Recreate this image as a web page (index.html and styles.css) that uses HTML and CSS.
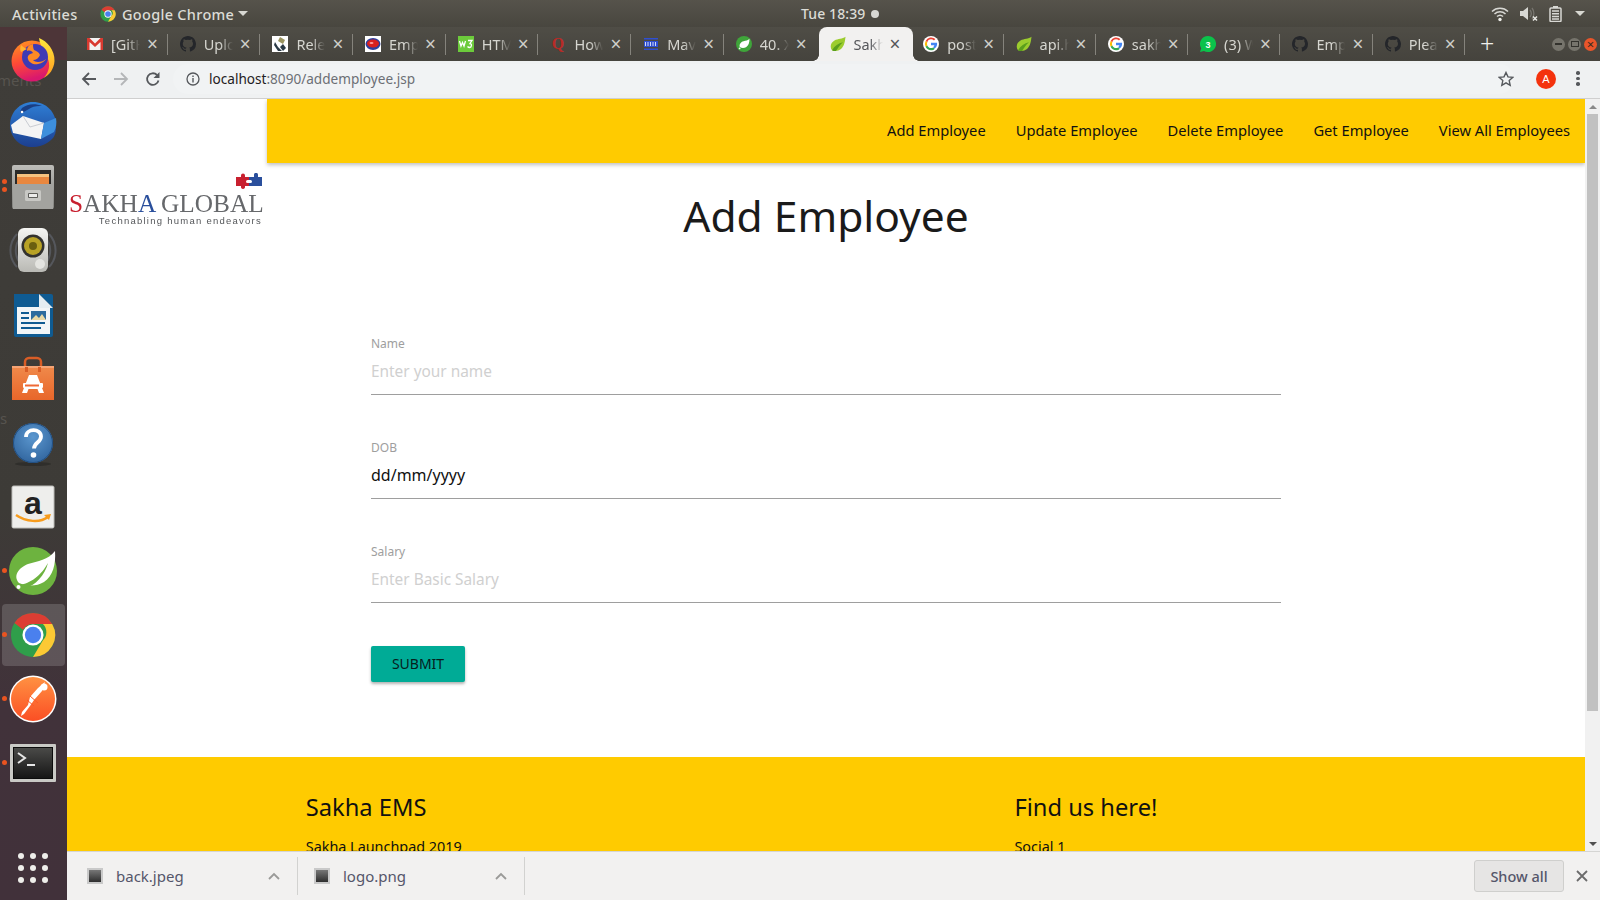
FILE: index.html
```html
<!DOCTYPE html>
<html lang="en">
<head>
<meta charset="utf-8">
<title>Add Employee</title>
<link rel="stylesheet" href="styles.css">
</head>
<body>
<svg class="defs" aria-hidden="true">
  <defs>
    <linearGradient id="ffg" x1="0" y1="0" x2="0.3" y2="1"><stop offset="0" stop-color="#ff9a1f"/><stop offset=".55" stop-color="#ff4a36"/><stop offset="1" stop-color="#d9186e"/></linearGradient>
    <linearGradient id="ffy" x1="0" y1="0" x2="0" y2="1"><stop offset="0" stop-color="#ffe93d"/><stop offset="1" stop-color="#ff9b1f"/></linearGradient>
    <linearGradient id="tb" x1="0" y1="0" x2="0" y2="1"><stop offset="0" stop-color="#2f7fd6"/><stop offset="1" stop-color="#1c3f8f"/></linearGradient>
    <linearGradient id="cab" x1="0" y1="0" x2="0" y2="1"><stop offset="0" stop-color="#bdbdb9"/><stop offset="1" stop-color="#82827e"/></linearGradient>
    <linearGradient id="spk" x1="0" y1="0" x2="0" y2="1"><stop offset="0" stop-color="#f5f5f2"/><stop offset="1" stop-color="#b9b9b4"/></linearGradient>
    <linearGradient id="bag" x1="0" y1="0" x2="0" y2="1"><stop offset="0" stop-color="#f08a4b"/><stop offset="1" stop-color="#e8662a"/></linearGradient>
    <radialGradient id="hlp" cx=".5" cy=".35" r=".75"><stop offset="0" stop-color="#5b97cf"/><stop offset="1" stop-color="#2c5f98"/></radialGradient>
    <linearGradient id="pm" x1="0" y1="0" x2="0" y2="1"><stop offset="0" stop-color="#ff9142"/><stop offset="1" stop-color="#fb4f24"/></linearGradient>
    <linearGradient id="trm" x1="0" y1="0" x2="0" y2="1"><stop offset="0" stop-color="#4a4a48"/><stop offset="1" stop-color="#161616"/></linearGradient>

    <symbol id="chrome" viewBox="0 0 48 48">
      <circle cx="24" cy="24" r="23" fill="#2f9e4a"/>
      <path d="M24 1a23 23 0 0 1 20 11.500H24a12 12 0 0 0-10.400 6L4.600 11.500A23 23 0 0 1 24 1z" fill="#dc3d33"/>
      <path d="M44 12.500A23 23 0 0 1 24 47l10.400-17.500a12 12 0 0 0 0-17z" fill="#fcc934"/>
      <circle cx="24" cy="24" r="11" fill="#fff"/>
      <circle cx="24" cy="24" r="8.500" fill="#4a80ee"/>
    </symbol>
    <symbol id="github" viewBox="0 0 16 16">
      <path fill="#24262a" d="M8 0C3.600 0 0 3.600 0 8c0 3.500 2.300 6.500 5.500 7.600.4.100.5-.2.500-.4v-1.400c-2.200.5-2.700-1-2.700-1-.4-.9-.9-1.200-.9-1.200-.7-.5.100-.5.100-.5.800.1 1.200.8 1.200.8.700 1.200 1.900.9 2.300.7.100-.5.300-.9.500-1.100-1.800-.2-3.700-.9-3.700-4 0-.9.300-1.600.8-2.100-.1-.2-.4-1 .1-2.100 0 0 .7-.2 2.200.8a7.600 7.600 0 0 1 4 0c1.500-1 2.200-.8 2.200-.8.500 1.100.2 1.900.1 2.100.5.600.8 1.300.8 2.100 0 3.100-1.900 3.700-3.700 3.900.3.300.6.800.6 1.500v2.200c0 .2.100.5.600.4A8 8 0 0 0 16 8c0-4.400-3.600-8-8-8z"/>
    </symbol>
    <symbol id="google" viewBox="0 0 16 16">
      <circle cx="8" cy="8" r="8" fill="#fff"/>
      <path fill="#ea4335" d="M8 3.200c1.200 0 2.200.4 3 1.200l1.400-1.400A6.300 6.300 0 0 0 2.600 5l1.700 1.300A3.900 3.900 0 0 1 8 3.200z"/>
      <path fill="#4285f4" d="M14.100 8.100c0-.5 0-.9-.1-1.300H8v2.500h3.400c-.2.800-.6 1.400-1.300 1.900l1.700 1.300c1.400-1.100 2.300-2.700 2.300-4.400z"/>
      <path fill="#fbbc05" d="M4.300 9.500a3.900 3.900 0 0 1 0-3.200L2.600 5a6.200 6.200 0 0 0 0 5.700z"/>
      <path fill="#34a853" d="M8 14.200c1.600 0 3-.5 3.800-1.500l-1.700-1.300c-.6.400-1.300.7-2.100.7-1.700 0-3.100-1.100-3.700-2.600l-1.700 1.300A6.300 6.300 0 0 0 8 14.200z"/>
    </symbol>
    <symbol id="leaf" viewBox="0 0 16 16">
      <path fill="#9ccc2e" d="M15.500.800C15 5 14.500 10 11 13c-2.800 2.300-6.500 2.200-9 1.200C-.5 11 .8 6.500 4.500 4.500 8 2.600 12.500 3.300 15.500.800z"/>
      <path fill="#5a9e1c" d="M2 14.200c2.500-4.500 6.500-7 11-8-3 2.500-5.500 6.500-7 8.800-1.500.1-2.800-.1-4-.8z"/>
    </symbol>
    <symbol id="springc" viewBox="0 0 16 16">
      <circle cx="8" cy="8" r="8" fill="#3fa53a"/>
      <path fill="#fff" d="M13.500 2.800c0 4-1 7-3.500 8.400-2 1.100-4.500 1-6.200-.2C3 8.500 4.800 6 7.500 5.300 9.800 4.700 12 4.500 13.500 2.800z"/>
      <circle cx="3.600" cy="12.400" r=".9" fill="#fff"/>
    </symbol>
  </defs>
</svg>

<header class="topbar">
  <span class="tb-text tb-activities">Activities</span>
  <svg class="tb-chrome" width="16" height="16"><use href="#chrome"/></svg>
  <span class="tb-text tb-app">Google Chrome</span>
  <span class="caret"></span>
  <span class="tb-text tb-clock">Tue 18:39</span>
  <span class="clock-dot"></span>
  <span class="tray">
    <svg width="18" height="16" viewBox="0 0 18 16"><path d="M1 5.500a11.500 11.500 0 0 1 16 0M3.500 8a8 8 0 0 1 11 0M6 10.500a4.500 4.500 0 0 1 6 0" fill="none" stroke="#d8d8d4" stroke-width="1.500"/><circle cx="9" cy="13.500" r="1.700" fill="#f0f0ec"/></svg>
    <svg width="18" height="16" viewBox="0 0 18 16"><path d="M0 5h3l5-4v13l-5-4H0z" fill="#d8d8d4"/><path d="M10 4c1.500 2 1.500 5 0 7M12 2c2.500 3 2.500 8 0 11" fill="none" stroke="#77756f" stroke-width="1.300"/><path d="M13 10.500l4 4M17 10.500l-4 4" stroke="#e8e8e4" stroke-width="1.500"/></svg>
    <svg width="13" height="16" viewBox="0 0 13 16"><rect x="4" y="0" width="5" height="2" fill="#d8d8d4"/><rect x="1" y="2" width="11" height="13.500" rx="1" fill="none" stroke="#d8d8d4" stroke-width="1.500"/><path d="M3 5h7M3 7.700h7M3 10.400h7M3 13h7" stroke="#d8d8d4" stroke-width="1.500"/></svg>
    <span class="caret tray-caret"></span>
  </span>
</header>

<div class="workspace">
  <nav class="dock" aria-label="Launcher">
    <span class="ghost ghost-a">ments</span>
    <span class="ghost ghost-b">s</span>
    <div class="dock-item">
      <svg width="48" height="48" viewBox="0 0 48 48">
        <circle cx="23" cy="26" r="20.500" fill="url(#ffg)"/>
        <path d="M30 3c8 3 16 12 15.500 23-.5 8-5 14-11 17 6-6 7-14 4-20C36 17 31 11 30 3z" fill="url(#ffy)"/>
        <circle cx="26" cy="22" r="13" fill="#3f3ab4"/>
        <path d="M24 9c-5 1-6 4-6 7 3-1 5 0 6 2-4 1-6 3-5 6 1 4 6 6 10 5 4-.5 7-3 8-5-2 2-5 3-8 3-2 0-4-1-5-2 3 0 6-2 7-5-1-3-4-4-6-5-1-2-1-4-1-6z" fill="#ff8a24"/>
        <path d="M12 10c-1 3-1 5 0 7l6-3c-2-1-4-2-6-4z" fill="#ffb52e"/>
      </svg>
    </div>
    <div class="dock-item">
      <svg width="48" height="48" viewBox="0 -2 48 48">
        <path d="M24 1C11 1 1 11 1 24c0 11 8 21 20 22 8 .5 17-2 23-9 3-4 3-9 3-13C47 11 37 1 24 1z" fill="url(#tb)"/>
        <path d="M13 7c5-4 13-5 20-2-5-.5-10 .5-13 3-3 2-6 3-9 4 0-2 1-3 2-5z" fill="#1a3f85"/>
        <circle cx="13" cy="11" r="1.300" fill="#fff"/>
        <path d="M2 24l12-9 21 7-3 16-28-6z" fill="#f4f4f4"/>
        <path d="M14 15l7 11 14-4" fill="none" stroke="#c9ccd2" stroke-width="1"/>
        <path d="M35 22l12-5c1 5 0 10-2 14l-13 7z" fill="#3d8fdc"/>
      </svg>
    </div>
    <div class="dock-item dock-two">
      <svg width="48" height="48" viewBox="0 0 48 48">
        <rect x="3" y="2" width="42" height="44" rx="2" fill="url(#cab)"/>
        <rect x="6" y="7" width="36" height="14" fill="#2b2a28"/>
        <rect x="8" y="11" width="32" height="3" fill="#f5c27f"/>
        <rect x="8" y="14" width="32" height="7" fill="#e8873f"/>
        <rect x="4" y="21" width="40" height="25" fill="#a3a39f"/>
        <rect x="16" y="27" width="16" height="11" rx="1.500" fill="#c8c8c4"/>
        <rect x="19" y="30" width="10" height="5" rx="1" fill="#5f5f5b"/>
        <rect x="20" y="31" width="8" height="3" fill="#ececea"/>
      </svg>
    </div>
    <div class="dock-item">
      <svg width="48" height="48" viewBox="0 0 48 48">
        <path d="M8 7a24 24 0 0 0 0 33M40 7a24 24 0 0 1 0 33M12 10a20 20 0 0 0 0 27M36 10a20 20 0 0 1 0 27" fill="none" stroke="#55575c" stroke-width="2"/>
        <rect x="9" y="1" width="30" height="44" rx="6" fill="url(#spk)"/>
        <circle cx="24" cy="19" r="11.500" fill="#33322e"/>
        <circle cx="24" cy="19" r="9" fill="#b8a225"/>
        <circle cx="24" cy="19" r="4" fill="#6a5e10"/>
        <circle cx="31" cy="37" r="5" fill="#e4e4e0"/>
      </svg>
    </div>
    <div class="dock-item">
      <svg width="48" height="48" viewBox="0 0 48 48">
        <path d="M5 3h25l14 14v27a2 2 0 0 1-2 2H7a2 2 0 0 1-2-2z" fill="#0f5b92"/>
        <path d="M30 3h12a2 2 0 0 1 2 2v12z" fill="#0f5b92"/>
        <path d="M8 16h22l11 0v27H8z" fill="#f1f5f7"/>
        <path d="M30 3l14 14H30z" fill="#e4edf2"/>
        <path d="M12 22h8M12 27h8M12 32h24M12 37h20" stroke="#0f5b92" stroke-width="2"/>
        <rect x="22" y="20" width="15" height="9" fill="#2c6c9e"/>
        <path d="M22 29l5-5 3 3 3-4 4 6z" fill="#e8d9a5"/>
      </svg>
    </div>
    <div class="dock-item">
      <svg width="48" height="48" viewBox="0 0 48 48">
        <path d="M16 12V7a4 4 0 0 1 4-4h8a4 4 0 0 1 4 4v5" fill="none" stroke="#d95d26" stroke-width="2.500"/>
        <path d="M3 11h42v34H3z" fill="url(#bag)"/>
        <path d="M3 11h42v2H3z" fill="#f5a475"/>
        <path d="M16 12h3v5h-3zM29 12h3v5h-3z" fill="#d95d26"/>
        <path d="M20 20h8l7 18h-5l-1.500-4h-9L18 38h-5z" fill="#fff"/>
        <rect x="14" y="28" width="20" height="5" rx="1" fill="#fff"/>
        <rect x="16" y="29.500" width="14" height="2" fill="#ef6a36"/>
      </svg>
    </div>
    <div class="dock-item">
      <svg width="48" height="48" viewBox="0 0 48 48">
        <ellipse cx="24" cy="45" rx="18" ry="2" fill="#2f2e2b"/>
        <circle cx="24" cy="24" r="20" fill="url(#hlp)"/>
        <circle cx="24" cy="24" r="19.500" fill="none" stroke="#224e80" stroke-width="1"/>
        <path d="M17 18c0-9 15-9 15-.5 0 6-7 6-7 12" fill="none" stroke="#fff" stroke-width="3.800"/>
        <circle cx="24.500" cy="36" r="2.800" fill="#fff"/>
      </svg>
    </div>
    <div class="dock-item">
      <svg width="48" height="48" viewBox="0 0 48 48">
        <rect x="3" y="3" width="42" height="42" rx="1.500" fill="#eeeeec" stroke="#bdbdb9"/>
        <text class="amazon-a" x="24" y="31" text-anchor="middle">a</text>
        <path d="M7 32c10 7 24 8 32 2" fill="none" stroke="#f79c1d" stroke-width="2.500"/>
        <path d="M35 32l7-1-2 6z" fill="#f79c1d"/>
      </svg>
    </div>
    <div class="dock-item dock-one">
      <svg width="48" height="48" viewBox="0 0 48 48">
        <circle cx="24" cy="24" r="24" fill="#6db33f"/>
        <path d="M46 4c1 13-2 25-11 31-8 5-18 4-25 1C4 29 9 21 19 17 29 14 39 13 46 4z" fill="#fff"/>
        <path d="M10 38c8-1 20-6 29-22-3 12-13 23-23 25z" fill="#6db33f"/>
        <circle cx="9.500" cy="40" r="2" fill="#fff"/>
      </svg>
    </div>
    <div class="dock-item dock-one dock-active">
      <svg width="46" height="46"><use href="#chrome"/></svg>
    </div>
    <div class="dock-item dock-one">
      <svg width="48" height="48" viewBox="0 0 48 48">
        <circle cx="24" cy="24" r="23.500" fill="#fff"/>
        <circle cx="24" cy="24" r="22" fill="url(#pm)"/>
        <path d="M36 7l-3 9-8 9-4 6-6 8-3 2 1-4 6-7 2-8 8-9z" fill="#fff"/>
        <circle cx="35" cy="12" r="3.500" fill="#fff"/>
        <path d="M21 21l8 7M18 25l7 6" stroke="#fb5a2a" stroke-width="1"/>
      </svg>
    </div>
    <div class="dock-item dock-one">
      <svg width="46" height="38" viewBox="0 0 46 38">
        <rect x="0" y="0" width="46" height="38" rx="1" fill="#c9c9c5"/>
        <rect x="3" y="3" width="40" height="32" fill="#0c0c0c"/>
        <rect x="4" y="4" width="38" height="30" fill="url(#trm)"/>
        <path d="M8 9l7 5-7 5" fill="none" stroke="#e6e6e6" stroke-width="2"/>
        <path d="M17 21h8" stroke="#e6e6e6" stroke-width="2"/>
      </svg>
    </div>
    <div class="dock-grid">
      <i></i><i></i><i></i><i></i><i></i><i></i><i></i><i></i><i></i>
    </div>
  </nav>

  <div class="browser">
    <div class="tabstrip">
      <div class="tab">
        <svg width="16" height="16" viewBox="0 0 16 16"><rect y="2" width="16" height="12" fill="#f2f2f2"/><path d="M0 2h2.500L8 7.500 13.500 2H16v12h-2.500V6L8 11 2.500 6v8H0z" fill="#d93a30"/></svg>
        <span class="tab-title">[GitHub] Please</span><span class="tab-x">×</span>
      </div>
      <div class="tab">
        <svg width="16" height="16"><use href="#github"/></svg>
        <span class="tab-title">Upload files</span><span class="tab-x">×</span>
      </div>
      <div class="tab">
        <svg width="16" height="16" viewBox="0 0 16 16"><rect width="16" height="16" fill="#fff"/><path d="M8 1l5 3-2 4-5-3z" fill="#9a9460"/><path d="M3 6l3 5 4 4H6L2 9z" fill="#2b3a46"/><path d="M11 8l3 4-3 3-3-4z" fill="#2b3a46"/></svg>
        <span class="tab-title">Releases</span><span class="tab-x">×</span>
      </div>
      <div class="tab">
        <svg width="16" height="16" viewBox="0 0 16 16"><rect width="16" height="16" fill="#fff"/><ellipse cx="8" cy="8" rx="7.500" ry="6" fill="#2c3f9e"/><ellipse cx="8" cy="7.500" rx="6" ry="4" fill="#d8201f"/><ellipse cx="6.500" cy="7" rx="2" ry="1" fill="#ff9a9a"/></svg>
        <span class="tab-title">Employee</span><span class="tab-x">×</span>
      </div>
      <div class="tab">
        <svg width="16" height="16" viewBox="0 0 16 16"><rect width="16" height="16" fill="#6ccb3b"/><path d="M1.500 5l1.500 5 1.500-3.500L6 10l1.500-5M10 4.500h4l-2 3c2 0 2 4-.5 4-1 0-1.500-.5-2-1" fill="none" stroke="#fff" stroke-width="1.300"/></svg>
        <span class="tab-title">HTML form</span><span class="tab-x">×</span>
      </div>
      <div class="tab">
        <svg width="16" height="16" viewBox="0 0 16 16"><text class="quora-q" x="8" y="13" text-anchor="middle">Q</text></svg>
        <span class="tab-title">How to run</span><span class="tab-x">×</span>
      </div>
      <div class="tab">
        <svg width="16" height="16" viewBox="0 0 16 16"><path d="M1 2h14v1.500H1zM1 12.500h14V14H1z" fill="#2f4fd1"/><rect x="1" y="5" width="14" height="6" fill="#2f4fd1"/><path d="M2.500 6v4M5 6v4M7.500 6v4M10 6v4M12.500 6v4" stroke="#fff" stroke-width=".8"/></svg>
        <span class="tab-title">Maven Rep</span><span class="tab-x">×</span>
      </div>
      <div class="tab tab-before-active">
        <svg width="16" height="16"><use href="#springc"/></svg>
        <span class="tab-title">40. XML</span><span class="tab-x">×</span>
      </div>
      <div class="tab tab-active">
        <svg width="16" height="16"><use href="#leaf"/></svg>
        <span class="tab-title">Sakha EMS</span><span class="tab-x">×</span>
      </div>
      <div class="tab">
        <svg width="16" height="16"><use href="#google"/></svg>
        <span class="tab-title">post method</span><span class="tab-x">×</span>
      </div>
      <div class="tab">
        <svg width="16" height="16"><use href="#leaf"/></svg>
        <span class="tab-title">api.html</span><span class="tab-x">×</span>
      </div>
      <div class="tab">
        <svg width="16" height="16"><use href="#google"/></svg>
        <span class="tab-title">sakha global</span><span class="tab-x">×</span>
      </div>
      <div class="tab">
        <svg width="16" height="16" viewBox="0 0 16 16"><path d="M8 0a8 8 0 0 0-6.800 12.200L0 16l4-1.100A8 8 0 1 0 8 0z" fill="#0bc24b"/><text class="wa-3" x="8" y="11.500" text-anchor="middle">3</text></svg>
        <span class="tab-title">(3) WhatsApp</span><span class="tab-x">×</span>
      </div>
      <div class="tab">
        <svg width="16" height="16"><use href="#github"/></svg>
        <span class="tab-title">Employee</span><span class="tab-x">×</span>
      </div>
      <div class="tab">
        <svg width="16" height="16"><use href="#github"/></svg>
        <span class="tab-title">Please</span><span class="tab-x">×</span>
      </div>
      <span class="new-tab">+</span>
      <div class="winbtns">
        <span class="winbtn"><i class="min"></i></span>
        <span class="winbtn"><i class="max"></i></span>
        <span class="winbtn winbtn-close">×</span>
      </div>
    </div>

    <div class="toolbar">
      <svg class="tool" width="16" height="16" viewBox="0 0 16 16"><path d="M15 8H2M8 2L2 8l6 6" fill="none" stroke="#55585c" stroke-width="1.800"/></svg>
      <svg class="tool" width="16" height="16" viewBox="0 0 16 16"><path d="M1 8h13M8 2l6 6-6 6" fill="none" stroke="#b4b6b8" stroke-width="1.800"/></svg>
      <svg class="tool" width="16" height="16" viewBox="0 0 16 16"><path d="M13.500 9.500A5.800 5.800 0 1 1 12 4" fill="none" stroke="#55585c" stroke-width="1.800"/><path d="M14.500 1v6h-6z" fill="#55585c"/></svg>
      <div class="omnibox">
        <svg width="14" height="14" viewBox="0 0 14 14"><circle cx="7" cy="7" r="6" fill="none" stroke="#55585c" stroke-width="1.300"/><rect x="6.300" y="6" width="1.400" height="4.500" fill="#55585c"/><rect x="6.300" y="3.500" width="1.400" height="1.500" fill="#55585c"/></svg>
        <span class="url"><b>localhost</b>:8090/addemployee.jsp</span>
        <svg class="star" width="16" height="16" viewBox="0 0 16 16"><path d="M8 1.500l2 4.400 4.700.5-3.500 3.200 1 4.700L8 11.900l-4.200 2.400 1-4.700L1.300 6.400 6 5.900z" fill="none" stroke="#55585c" stroke-width="1.400"/></svg>
      </div>
      <span class="avatar">A</span>
      <span class="kebab"><i></i><i></i><i></i></span>
    </div>

    <div class="viewport">
      <main class="page">
        <div class="topnav-row">
          <div class="topnav-spacer"></div>
          <nav class="topnav">
            <a href="#">Add Employee</a>
            <a href="#">Update Employee</a>
            <a href="#">Delete Employee</a>
            <a href="#">Get Employee</a>
            <a href="#">View All Employees</a>
          </nav>
        </div>
        <div class="content">
          <div class="logo">
            <svg class="puzzle" width="26" height="16" viewBox="0 0 26 16"><path d="M0 4h5V2.500a2 2 0 0 1 4 0V4h4v3h-1.500a1.500 1.500 0 0 0 0 3H13v3H9v1.500a2 2 0 0 1-2 1.500 2 2 0 0 1-2-1.500V13H0z" fill="#c8202f"/><path d="M13 4h5V1.800a2 2 0 0 1 4 0V4h4v9H13v-3h1.500a1.500 1.500 0 0 0 0-3H13z" fill="#2a4f9c"/></svg>
            <div class="logo-name"><span class="logo-s">S</span>AKH<span class="logo-a">A</span> GLOBAL</div>
            <div class="logo-tag">Technabling human endeavors</div>
          </div>
          <div class="main-col">
            <h1 class="title">Add Employee</h1>
            <form class="form">
              <div class="field">
                <label for="name">Name</label>
                <input id="name" type="text" placeholder="Enter your name">
              </div>
              <div class="field">
                <label for="dob">DOB</label>
                <input id="dob" type="text" value="dd/mm/yyyy">
              </div>
              <div class="field">
                <label for="salary">Salary</label>
                <input id="salary" type="text" placeholder="Enter Basic Salary">
              </div>
              <button class="submit" type="button">SUBMIT</button>
            </form>
          </div>
        </div>
        <footer class="footer">
          <div class="footer-inner">
            <div class="footer-col">
              <h2>Sakha EMS</h2>
              <p>Sakha Launchpad 2019</p>
            </div>
            <div class="footer-col">
              <h2>Find us here!</h2>
              <p>Social 1</p>
            </div>
          </div>
        </footer>
      </main>
      <div class="scrollbar">
        <span class="sb-arrow sb-up"></span>
        <div class="sb-track"><div class="sb-thumb"></div></div>
        <span class="sb-arrow sb-down"></span>
      </div>
    </div>

    <div class="downloads">
      <div class="dl-item">
        <span class="dl-icon"></span><span class="dl-name">back.jpeg</span>
        <svg class="dl-chev" width="12" height="8" viewBox="0 0 12 8"><path d="M1 7l5-5 5 5" fill="none" stroke="#9a9a98" stroke-width="1.800"/></svg>
      </div>
      <div class="dl-item">
        <span class="dl-icon"></span><span class="dl-name">logo.png</span>
        <svg class="dl-chev" width="12" height="8" viewBox="0 0 12 8"><path d="M1 7l5-5 5 5" fill="none" stroke="#9a9a98" stroke-width="1.800"/></svg>
      </div>
      <button class="show-all" type="button">Show all</button>
      <svg class="dl-close" width="12" height="12" viewBox="0 0 12 12"><path d="M1 1l10 10M11 1L1 11" stroke="#6b6b6b" stroke-width="1.800"/></svg>
    </div>
  </div>
</div>
</body>
</html>
```

FILE: styles.css
```css
* { box-sizing: border-box; }
html, body { margin: 0; height: 100%; }
body {
  width: 1600px;
  height: 900px;
  overflow: hidden;
  display: flex;
  flex-direction: column;
  font-family: "Noto Sans", "Open Sans", sans-serif;
  background: #3d3b37;
}
.defs { position: absolute; width: 0; height: 0; }

/* Ubuntu top bar */
.topbar {
  height: 27px;
  flex: none;
  display: flex;
  align-items: center;
  background: linear-gradient(#56534b, #48463f);
  color: #dcdcd6;
}
.tb-text { font-size: 14.500px; font-weight: 500; white-space: nowrap; letter-spacing: .3px; }
.tb-activities { margin-left: 12px; width: 88px; }
.tb-chrome { flex: none; }
.tb-app { margin-left: 6px; width: 116px; }
.caret {
  width: 0; height: 0;
  border-left: 5px solid transparent;
  border-right: 5px solid transparent;
  border-top: 5px solid #d8d8d2;
}
.tb-clock { margin-left: 553px; width: 70px; font-size: 14px; letter-spacing: .1px; }
.clock-dot { width: 8px; height: 8px; border-radius: 50%; background: #d8d8d4; }
.tray { margin-left: auto; display: flex; align-items: center; gap: 11px; padding-right: 15px; }
.tray-caret { margin-left: 2px; }

.workspace { flex: 1; display: flex; min-height: 0; }

/* Launcher */
.dock {
  width: 67px;
  flex: none;
  position: relative;
  display: flex;
  flex-direction: column;
  overflow: hidden;
  padding-right: 1px;
  background: linear-gradient(#4d3538 0, #4d3538 33px, #3f3d39 33px, #3d3b37 55%, #41323a 78%, #41313a 100%);
}
.ghost { position: absolute; font-size: 15px; color: #57544f; }
.ghost-a { left: -3px; top: 43px; }
.ghost-b { left: 0; top: 381px; }
.dock-item {
  height: 64px;
  flex: none;
  display: flex;
  align-items: center;
  justify-content: center;
  position: relative;
}
.dock-active::after {
  content: "";
  position: absolute;
  inset: 1px 1px 1px 2px;
  border-radius: 4px;
  background: rgba(255, 255, 255, .16);
}
.dock-active svg { position: relative; z-index: 1; }
.dock-one::before, .dock-two::before {
  content: "";
  position: absolute;
  left: 2px;
  top: 29px;
  width: 5px;
  height: 5px;
  border-radius: 50%;
  background: #e95420;
  z-index: 2;
}
.dock-two::before { top: 24px; box-shadow: 0 8px 0 #e95420; }
.dock-grid {
  margin-top: auto;
  margin-bottom: 17px;
  align-self: center;
  display: grid;
  grid-template-columns: repeat(3, 6px);
  gap: 6px;
}
.dock-grid i { width: 6px; height: 6px; border-radius: 50%; background: #eeeeea; }

.amazon-a { font: 700 32px "Liberation Sans", sans-serif; fill: #222; }
.quora-q { font: 700 16px "Liberation Serif", serif; fill: #b92b27; }
.wa-3 { font: 700 9px "Liberation Sans", sans-serif; fill: #fff; }

/* Browser */
.browser { flex: 1; min-width: 0; display: flex; flex-direction: column; }
.tabstrip {
  height: 34px;
  flex: none;
  display: flex;
  padding-left: 8px;
  background: linear-gradient(#4f4d46, #45433d);
}
.tab {
  width: 92.700px;
  flex: none;
  height: 34px;
  padding-left: 12px;
  display: flex;
  align-items: center;
  color: #d6d6d0;
  position: relative;
}
.tab > svg { flex: none; }
.tab::after {
  content: "";
  position: absolute;
  right: 0;
  top: 7px;
  height: 21px;
  width: 1px;
  background: #85837c;
}
.tab-before-active::after { display: none; }
.tab-active {
  width: 94.500px;
  margin: 0 -1.800px 0 2px;
  padding-left: 11px;
  background: #f2f1f0;
  color: #55565a;
  border-radius: 8px 8px 0 0;
  z-index: 1;
}
.tab-active ~ .tab { width: 92.300px; }
.tab-active::before, .tab-active::after {
  content: "";
  position: absolute;
  bottom: 0;
  top: auto;
  width: 6px;
  height: 6px;
  background: radial-gradient(circle at 0 0, transparent 5.500px, #f2f1f0 6px);
}
.tab-active::before { left: -6px; }
.tab-active::after {
  right: -6px;
  background: radial-gradient(circle at 100% 0, transparent 5.500px, #f2f1f0 6px);
}
.tab-title {
  margin-left: 8px;
  width: 29px;
  flex: none;
  overflow: hidden;
  white-space: nowrap;
  font-size: 14.500px;
  -webkit-mask-image: linear-gradient(90deg, #000 55%, transparent 100%);
  mask-image: linear-gradient(90deg, #000 55%, transparent 100%);
}
.tab-x { margin-left: 7px; font-size: 19px; line-height: 1; color: #cfcfca; }
.tab-active .tab-x { color: #55565a; }
.new-tab { margin-left: 15px; font-size: 25px; line-height: 32px; color: #f0f0ec; font-weight: 300; }
.winbtns { margin-left: auto; padding-right: 3px; display: flex; align-items: center; gap: 3px; }
.winbtn {
  width: 13px; height: 13px;
  border-radius: 50%;
  background: #76746c;
  display: flex;
  align-items: center;
  justify-content: center;
  color: #3a2a20;
  font-size: 13px;
  line-height: 1;
}
.winbtn-close { background: #e9552a; }
.winbtn i { display: block; }
.min { width: 7px; height: 1.500px; background: #33322d; }
.max { width: 8px; height: 6px; border: 1px solid #33322d; }

.toolbar {
  height: 38px;
  flex: none;
  display: flex;
  align-items: center;
  padding: 0 0 2px 14px;
  background: #eff1f2;
  border-bottom: 1px solid #cfcfcf;
}
.tool { margin-right: 16px; flex: none; }
.omnibox {
  margin-left: -4px;
  height: 30px;
  width: 1341px;
  padding: 0 0 0 13px;
  border-radius: 15px;
  background: #f1f3f4;
  display: flex;
  align-items: center;
}
.url { margin-left: 9px; font-size: 13.600px; color: #6c6f75; white-space: nowrap; }
.url b { font-weight: 400; color: #1f2022; }
.star { margin-left: auto; }
.avatar {
  margin-left: 22px;
  width: 20px; height: 20px;
  flex: none;
  border-radius: 50%;
  background: #f4320d;
  color: #fff;
  font: 11px/20px "Liberation Sans", sans-serif;
  text-align: center;
}
.kebab { margin-left: 20px; width: 4px; display: flex; flex-direction: column; gap: 2px; }
.kebab i { width: 3.500px; height: 3.500px; border-radius: 50%; background: #55585c; }

/* Page */
.viewport { flex: 1; display: flex; min-height: 0; }
.page { flex: 1; min-width: 0; background: #fff; overflow: hidden; color: #111; }
.topnav-row { display: flex; height: 64px; }
.topnav-spacer { width: 200px; flex: none; }
.topnav {
  flex: 1;
  display: flex;
  justify-content: flex-end;
  align-items: center;
  padding-bottom: 2px;
  background: #ffcb00;
  box-shadow: 0 2px 4px rgba(0, 0, 0, .25);
}
.topnav a { padding: 0 15px; font-size: 14.700px; color: #111; text-decoration: none; white-space: nowrap; }
.content { display: grid; grid-template-columns: 200px 1fr 200px; }
.logo { padding: 10px 5px 0 2px; display: flex; flex-direction: column; filter: blur(.35px); }
.puzzle { align-self: flex-end; }
.logo-name {
  margin-top: 2px;
  font: 25.300px/24px "Liberation Serif", serif;
  color: #66686b;
  white-space: nowrap;
}
.logo-s { color: #c8202f; }
.logo-a { color: #2a4f9c; }
.logo-tag {
  align-self: flex-end;
  font: 9.500px/12px "Liberation Sans", sans-serif;
  letter-spacing: 1.250px;
  color: #55575a;
  white-space: nowrap;
}
.main-col { display: flex; flex-direction: column; align-items: center; }
.title { margin: 23px 0 0; font-size: 42.500px; line-height: 60px; font-weight: 400; color: #1a1a1a; }
.form { width: 910px; margin: 90px 0 75px; display: flex; flex-direction: column; align-items: flex-start; }
.field { width: 100%; margin-bottom: 45px; }
.field label { display: block; font-size: 12px; line-height: 16px; color: #9e9e9e; }
.field input {
  display: block;
  width: 100%;
  height: 43px;
  padding: 0 0 5px;
  border: 0;
  border-bottom: 1px solid #9e9e9e;
  background: none;
  outline: 0;
  font: 16px "Noto Sans", sans-serif;
  color: #111;
}
.field input::placeholder { color: #d0d0d0; opacity: 1; font-size: 15.400px; }
.submit {
  width: 94px;
  height: 36px;
  margin-top: -2px;
  padding: 0 0 2px;
  border: 0;
  border-radius: 2px;
  background: #00ab96;
  color: #06201d;
  font: 14px "Noto Sans", sans-serif;
  box-shadow: 0 2px 3px rgba(0, 0, 0, .3);
}
.footer { background: #ffcb00; padding: 34px 0 40px; }
.footer-inner { width: 1063px; margin: 0 auto; display: grid; grid-template-columns: 2fr 1fr; }
.footer-col { padding: 0 11.250px; }
.footer-col h2 { margin: 0 0 13px; font-size: 23.700px; line-height: 32px; font-weight: 400; color: #111; }
.footer-col p { margin: 0; font-size: 14.400px; line-height: 22px; color: #111; }

.scrollbar { width: 15px; flex: none; display: flex; flex-direction: column; background: #f1f1f1; }
.sb-arrow { height: 15px; flex: none; display: flex; align-items: center; justify-content: center; }
.sb-arrow::before {
  content: "";
  border-left: 4px solid transparent;
  border-right: 4px solid transparent;
}
.sb-up::before { border-bottom: 4px solid #8a8a8a; }
.sb-down::before { border-top: 4px solid #505050; }
.sb-track { flex: 1; padding: 0 2px; }
.sb-thumb { height: 597px; background: #c1c1c1; }

/* Download shelf */
.downloads {
  height: 49px;
  flex: none;
  display: flex;
  align-items: center;
  padding: 0 0 1px 4px;
  background: #f2f1f0;
  border-top: 1px solid #d5d5d3;
}
.dl-item {
  width: 227px;
  height: 38px;
  flex: none;
  padding: 0 17px 0 16px;
  display: flex;
  align-items: center;
  border-right: 1px solid #d2d2d0;
}
.dl-icon {
  width: 16px; height: 16px;
  flex: none;
  border: 2px solid #c9c9c9;
  background: linear-gradient(#777, #2e2e2e);
}
.dl-name { margin-left: 13px; font-size: 15px; color: #55566a; }
.dl-chev { margin-left: auto; }
.show-all {
  margin-left: auto;
  width: 90px;
  height: 32px;
  border: 1px solid #cfcfcd;
  border-radius: 3px;
  background: #e6e5e4;
  font: 500 14.500px "Noto Sans", sans-serif;
  color: #55566a;
}
.dl-close { margin: 0 12px 0 12px; flex: none; }
```
